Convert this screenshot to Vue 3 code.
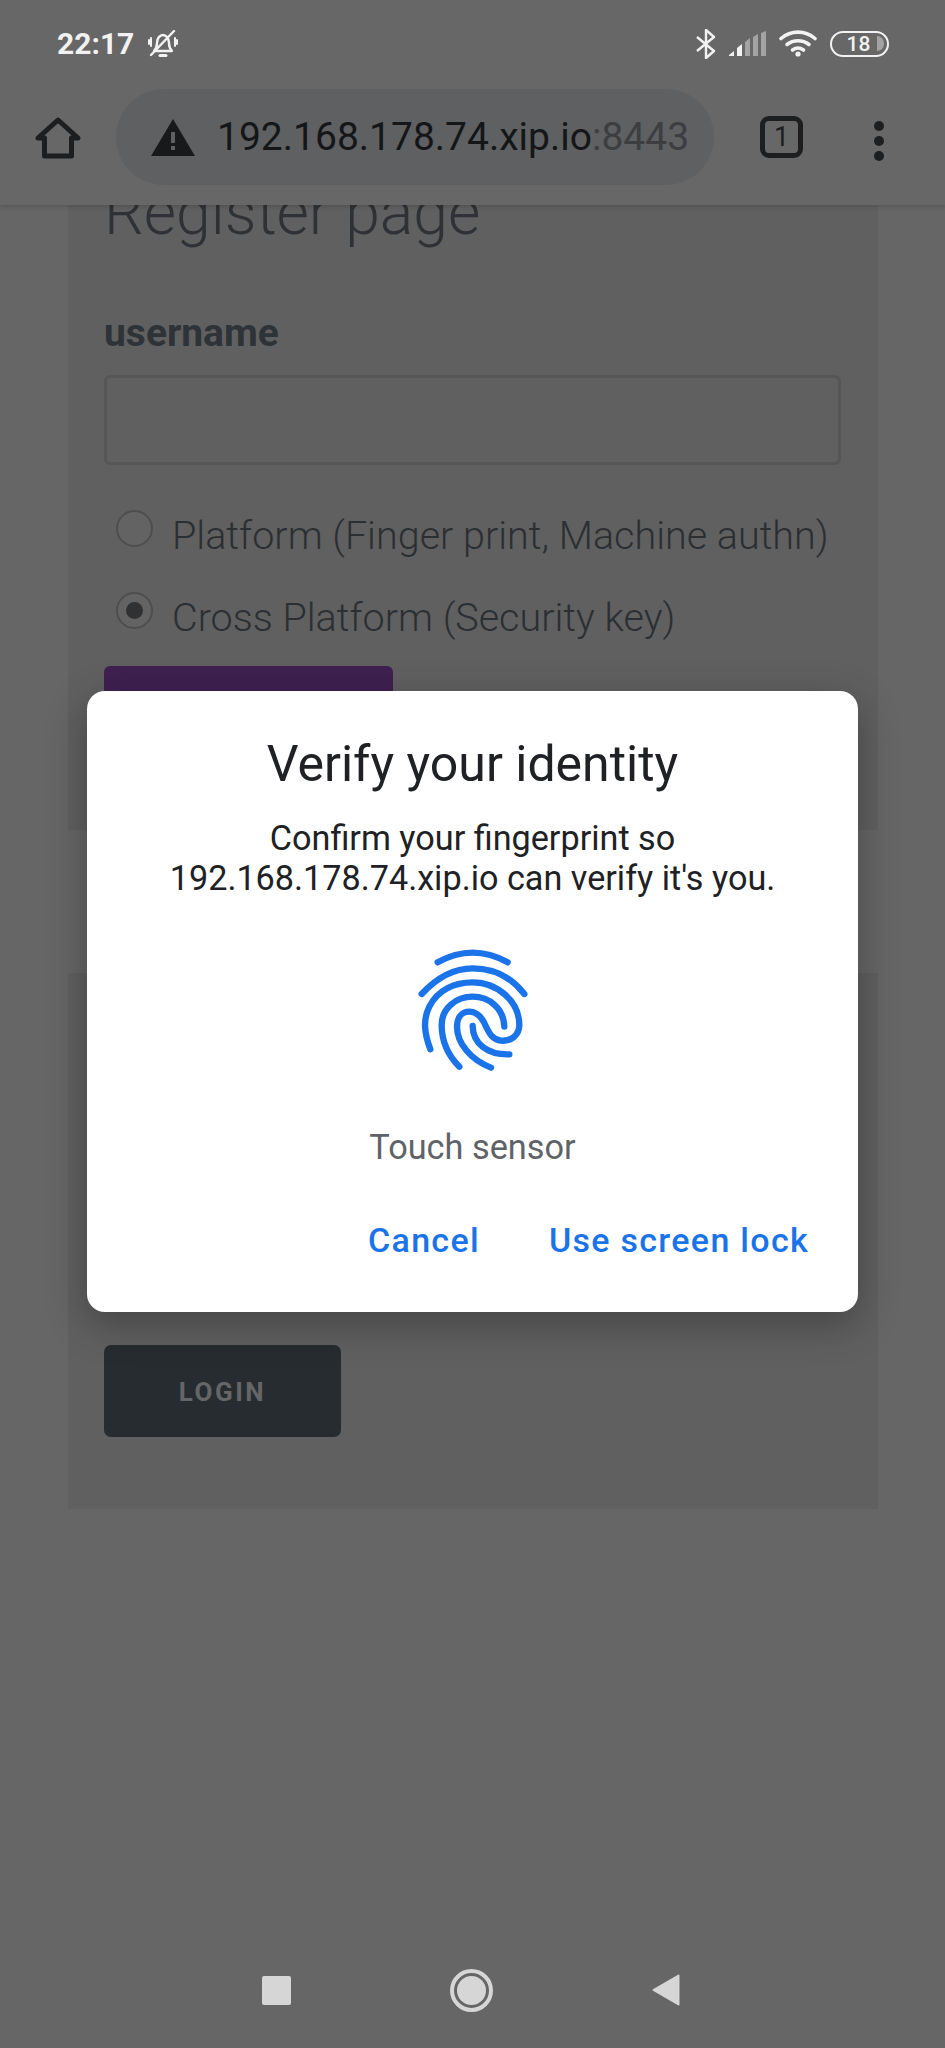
<script setup>
const radios = [
  { label: 'Platform (Finger print, Machine authn)', checked: false },
  { label: 'Cross Platform (Security key)', checked: true }
]
const signalBars = [
  { points: '0,25 5,25 5,20 0,24', on: true },
  { points: '8,25 13,25 13,13 8,17', on: true },
  { points: '16,25 21,25 21,7 16,11', on: false },
  { points: '24,25 29,25 29,3 24,6', on: false },
  { points: '32,25 37,25 37,0 32,2', on: false }
]
</script>

<template>
  <div class="phone">
    <header class="chrome">
      <div class="status-bar">
        <div class="status-left">
          <span class="clock">22:17</span>
          <svg class="bell" width="30" height="28" viewBox="0 0 30 28" fill="none" stroke="#f2f2f2" stroke-width="2.4" stroke-linecap="round" stroke-linejoin="round">
            <path d="M6 21c2-2 3-4 3-8 0-5 3-8 6-8s6 3 6 8c0 4 1 6 3 8z" />
            <path d="M12 25.500h6" stroke-width="3" />
            <path d="M3 8v8M1 10v4M27 8v8M29 10v4" stroke-width="2" />
            <path d="M3 25 26 1" />
          </svg>
        </div>
        <div class="status-right">
          <svg width="20" height="30" viewBox="0 0 20 30" fill="none" stroke="#f2f2f2" stroke-width="2.4" stroke-linejoin="round">
            <path d="M1 8l17 14-8 7V1l8 7L1 22" />
          </svg>
          <svg width="37" height="25" viewBox="0 0 37 25">
            <polygon
              v-for="bar in signalBars"
              :key="bar.points"
              :points="bar.points"
              :fill="bar.on ? '#f2f2f2' : '#a3a3a3'"
            />
          </svg>
          <svg width="38" height="27" viewBox="0 0 38 27" fill="none" stroke="#f2f2f2" stroke-width="3.6" stroke-linecap="round">
            <path d="M2 8.500C12 0 26 0 36 8.500" />
            <path d="M8 14.500c6.500-5 15.500-5 22 0" />
            <path d="M13.500 20c3.500-2.500 7.500-2.500 11 0" />
            <circle cx="19" cy="24" r="2.600" fill="#f2f2f2" stroke="none" />
          </svg>
          <div class="battery">
            <span class="battery-num">18</span>
            <span class="battery-level"></span>
          </div>
        </div>
      </div>
      <div class="toolbar">
        <svg class="home" width="46" height="42" viewBox="0 0 46 42" fill="none" stroke="#1c1e20" stroke-width="5" stroke-linejoin="round">
          <path d="M3 21 23 3l20 18h-6.500v18h-27V21z" />
        </svg>
        <div class="url-pill">
          <svg width="44" height="37" viewBox="0 0 44 37">
            <path d="M22 0 44 37H0z" fill="#17191b" />
            <rect x="20" y="13" width="4" height="11" fill="#5f6062" />
            <rect x="20" y="27" width="4" height="4" fill="#5f6062" />
          </svg>
          <span class="url">192.168.178.74.xip.io<span class="port">:8443</span></span>
        </div>
        <div class="tab-count">1</div>
        <div class="menu-dots"><i></i><i></i><i></i></div>
      </div>
    </header>

    <main class="content">
      <section class="card register">
        <h1 class="page-title">Register page</h1>
        <label class="field-label">username</label>
        <div class="text-input"></div>
        <div v-for="radio in radios" :key="radio.label" class="radio-row">
          <span class="radio" :class="{ checked: radio.checked }"></span>
          <span class="radio-label">{{ radio.label }}</span>
        </div>
        <div class="register-btn"></div>
      </section>
      <section class="card login">
        <div class="login-btn">LOGIN</div>
      </section>
    </main>

    <footer class="nav-bar">
      <span class="nav-square"></span>
      <span class="nav-circle"><i></i></span>
      <svg width="28" height="32" viewBox="0 0 28 32">
        <path d="M26.500 1.500v29L1.500 16z" fill="#d6d6d6" stroke="#d6d6d6" stroke-width="2" stroke-linejoin="round" />
      </svg>
    </footer>

    <div class="dialog">
      <h2 class="dialog-title">Verify your identity</h2>
      <p class="dialog-text">Confirm your fingerprint so<br />192.168.178.74.xip.io can verify it's you.</p>
      <svg class="fingerprint" width="130" height="144" viewBox="120 66 390 432" fill="none" stroke="#1a73e8" stroke-width="19" stroke-linecap="round">
        <path d="M200 127Q305 69 410 127" />
        <path d="M152 222C200 170 250 145 305 145C365 145 420 170 460 222" />
        <path d="M178 388C160 340 155 300 175 260C200 210 250 187 305 187C380 187 445 245 445 315C445 345 420 365 390 362C365 360 355 340 345 320C335 295 320 275 295 275C270 275 258 295 258 320C258 370 300 420 360 443" />
        <path d="M265 440C230 405 212 360 212 315C212 265 255 230 305 230C355 230 398 265 400 320" />
        <path d="M305 318C305 370 350 405 415 403" />
      </svg>
      <p class="dialog-hint">Touch sensor</p>
      <div class="dialog-actions">
        <span>Cancel</span>
        <span>Use screen lock</span>
      </div>
    </div>
  </div>
</template>

<style>
html,
body {
  margin: 0;
  background: #666;
}
</style>

<style scoped>
.phone {
  position: relative;
  width: 945px;
  height: 2048px;
  display: flex;
  flex-direction: column;
  background: #666;
  overflow: hidden;
  font-family: Roboto, "Liberation Sans", sans-serif;
}

.chrome {
  position: relative;
  z-index: 2;
  height: 205px;
  flex: none;
  background: #676767;
  box-shadow: 0 2px 4px rgba(0, 0, 0, 0.15);
}

.status-bar {
  height: 87px;
  box-sizing: border-box;
  padding: 0 56px 0 57px;
  display: flex;
  align-items: center;
  justify-content: space-between;
}

.status-left,
.status-right {
  display: flex;
  align-items: center;
}

.clock {
  font-size: 30px;
  font-weight: 700;
  color: #f2f2f2;
}

.bell {
  margin-left: 14px;
}

.status-right {
  gap: 13px;
}

.battery {
  width: 59px;
  height: 26px;
  box-sizing: border-box;
  border: 2.500px solid #f2f2f2;
  border-radius: 13px;
  position: relative;
  display: flex;
  align-items: center;
  justify-content: center;
}

.battery-num {
  font-size: 21px;
  font-weight: 500;
  color: #f2f2f2;
  margin-right: 2px;
}

.battery-level {
  position: absolute;
  right: 3px;
  top: 3px;
  width: 7px;
  height: 15px;
  background: #a3a3a3;
  border-radius: 0 8px 8px 0;
}

.toolbar {
  height: 118px;
  display: flex;
  align-items: flex-start;
  padding-top: 2px;
  position: relative;
}

.home {
  margin: 28px 0 0 35px;
}

.url-pill {
  width: 598px;
  height: 96px;
  box-sizing: border-box;
  margin-left: 35px;
  padding-left: 35px;
  border-radius: 48px;
  background: #5f6062;
  display: flex;
  align-items: center;
  gap: 22px;
}

.url {
  font-size: 39px;
  color: #141618;
  white-space: nowrap;
}

.port {
  color: #3c3e40;
}

.tab-count {
  width: 43px;
  height: 42px;
  box-sizing: border-box;
  margin: 27px 0 0 46px;
  border: 5px solid #1c1e20;
  border-radius: 9px;
  font-size: 27px;
  font-weight: 400;
  color: #1c1e20;
  display: flex;
  align-items: center;
  justify-content: center;
}

.menu-dots {
  margin: 32px 0 0 71px;
  display: flex;
  flex-direction: column;
  gap: 5px;
}

.menu-dots i {
  width: 10px;
  height: 10px;
  border-radius: 50%;
  background: #1c1e20;
}

.content {
  flex: 1;
  min-height: 0;
  box-sizing: border-box;
  padding: 0 67px 0 68px;
  display: flex;
  flex-direction: column;
  gap: 143px;
}

.card {
  background: #606060;
  box-sizing: border-box;
  padding: 0 37px 0 36px;
}

.register {
  height: 625px;
  overflow: hidden;
}

.page-title {
  margin: -27px 0 0;
  font-size: 62.500px;
  line-height: 70px;
  font-weight: 300;
  color: #2e3135;
}

.field-label {
  display: block;
  margin-top: 63px;
  font-size: 39px;
  line-height: 44px;
  font-weight: 700;
  color: #2e3338;
}

.text-input {
  height: 90px;
  box-sizing: border-box;
  margin-top: 20px;
  border: 3px solid #565656;
  border-radius: 6px;
}

.radio-row {
  display: flex;
  align-items: flex-start;
  height: 82px;
  padding-left: 12px;
}

.text-input + .radio-row {
  margin-top: 45px;
}

.radio {
  width: 37px;
  height: 37px;
  box-sizing: border-box;
  border: 2px solid #4e4e4e;
  border-radius: 50%;
  background: #636363;
  position: relative;
  flex: none;
}

.radio.checked::after {
  content: "";
  position: absolute;
  left: 8px;
  top: 8px;
  width: 17px;
  height: 17px;
  border-radius: 50%;
  background: #303133;
}

.radio-label {
  margin-left: 19px;
  font-size: 39.500px;
  line-height: 51px;
  font-weight: 300;
  color: #2c2f32;
  white-space: nowrap;
}

.register-btn {
  width: 289px;
  height: 92px;
  margin-top: -8px;
  background: #3f2050;
  border-radius: 6px;
}

.login {
  flex: none;
  height: 536px;
  padding-top: 372px;
}

.login-btn {
  width: 237px;
  height: 92px;
  box-sizing: border-box;
  padding-top: 2px;
  background: #272c30;
  border-radius: 7px;
  display: flex;
  align-items: center;
  justify-content: center;
  font-size: 26px;
  font-weight: 700;
  letter-spacing: 2.500px;
  color: #646668;
}

.nav-bar {
  position: absolute;
  left: 262px;
  bottom: 36px;
  width: 418px;
  height: 44px;
  display: flex;
  align-items: center;
  justify-content: space-between;
}

.nav-square {
  width: 29px;
  height: 29px;
  border-radius: 2px;
  background: #d6d6d6;
}

.nav-circle {
  width: 43px;
  height: 43px;
  box-sizing: border-box;
  border: 4px solid #d6d6d6;
  border-radius: 50%;
  display: flex;
  align-items: center;
  justify-content: center;
}

.nav-circle i {
  width: 29px;
  height: 29px;
  border-radius: 50%;
  background: #d6d6d6;
}

.dialog {
  position: absolute;
  z-index: 3;
  left: 87px;
  top: 691px;
  width: 771px;
  height: 621px;
  box-sizing: border-box;
  border-radius: 18px;
  background: #fff;
  box-shadow: 0 12px 40px rgba(0, 0, 0, 0.3);
  text-align: center;
  color: #202124;
}

.dialog-title {
  margin: 43px 0 0;
  font-size: 50px;
  line-height: 60px;
  font-weight: 400;
}

.dialog-text {
  margin: 24px 0 0;
  font-size: 34.200px;
  line-height: 40px;
}

.fingerprint {
  display: block;
  margin: 44px auto 0;
  transform: translateX(3px);
}

.dialog-hint {
  margin: 41px 0 0;
  font-size: 34.300px;
  line-height: 40px;
  color: #5f6368;
}

.dialog-actions {
  display: flex;
  justify-content: flex-end;
  gap: 69px;
  margin-top: 53px;
  padding-right: 49px;
  font-size: 34px;
  line-height: 40px;
  font-weight: 500;
  letter-spacing: 1.300px;
  color: #1a73e8;
}
</style>
